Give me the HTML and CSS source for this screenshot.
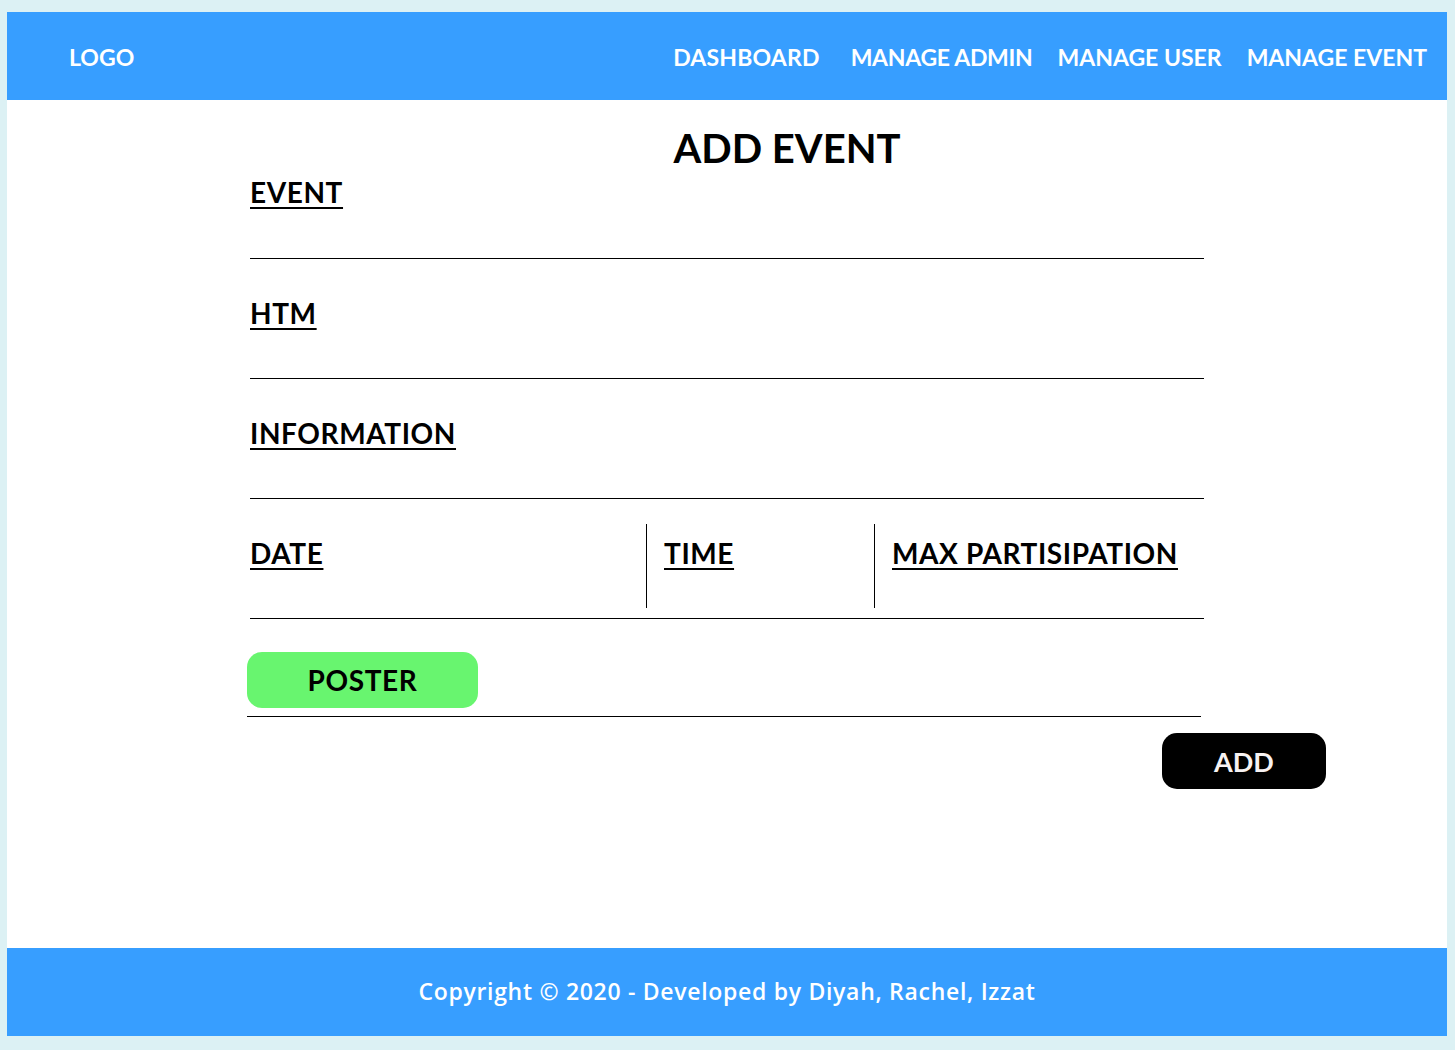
FILE: index.html
```html
<!DOCTYPE html>
<html lang="en">
<head>
<meta charset="utf-8">
<title>Add Event</title>
<link rel="stylesheet" href="styles.css">
</head>
<body>
<div class="page">
  <header class="topbar">
    <div class="logo">LOGO</div>
    <nav class="nav">
      <a class="nav-link nav-first" href="#">DASHBOARD</a>
      <a class="nav-link nav-admin" href="#">MANAGE ADMIN</a>
      <a class="nav-link" href="#">MANAGE USER</a>
      <a class="nav-link" href="#">MANAGE EVENT</a>
    </nav>
  </header>
  <main class="content">
    <form class="form">
      <h1 class="title">ADD EVENT</h1>
      <div class="field field-first"><label class="label">EVENT</label></div>
      <div class="field"><label class="label">HTM</label></div>
      <div class="field"><label class="label">INFORMATION</label></div>
      <div class="field field-row">
        <div class="col col-date"><label class="label">DATE</label></div>
        <div class="col col-time"><label class="label">TIME</label></div>
        <div class="col col-max"><label class="label">MAX PARTISIPATION</label></div>
      </div>
      <div class="poster-row">
        <button type="button" class="btn-poster">POSTER</button>
      </div>
      <div class="actions">
        <button type="button" class="btn-add">ADD</button>
      </div>
    </form>
  </main>
  <footer class="footer">Copyright © 2020 - Developed by Diyah, Rachel, Izzat</footer>
</div>
</body>
</html>
```
FILE: styles.css
```css
* { box-sizing: border-box; }
html, body { margin: 0; padding: 0; }
body {
  background: #dcf1f4;
  font-family: Lato, "Open Sans", sans-serif;
  color: #000;
}
.page {
  margin: 12px 8px 14px 7px;
  height: 1024px;
  display: flex;
  flex-direction: column;
  background: #fff;
}
.topbar {
  height: 88px;
  flex: none;
  background: #379eff;
  display: flex;
  align-items: center;
  justify-content: space-between;
  padding: 3px 20px 0 62px;
  color: #fff;
  font-size: 23px;
  font-weight: 700;
}
.logo { line-height: 1; }
.nav { display: flex; gap: 25px; }
.nav-link { color: #fff; text-decoration: none; line-height: 1; }
.nav-first { margin-right: 6px; letter-spacing: 0.2px; }
.nav-admin { letter-spacing: -0.3px; }
.content { flex: 1; }
.form {
  width: 954px;
  margin-left: 243px;
  display: flex;
  flex-direction: column;
}
.title {
  margin: 0;
  padding: 26px 0 0 120px;
  text-align: center;
  font-size: 40px;
  line-height: 44px;
  font-weight: 700;
}
.label {
  font-size: 28px;
  font-weight: 700;
  letter-spacing: 0.6px;
  text-decoration: underline;
  text-underline-offset: 4px;
  text-decoration-thickness: 2px;
  line-height: 32px;
  display: inline-block;
}
.field {
  height: 120px;
  border-bottom: 1px solid #000;
  padding-top: 38px;
}
.field-first {
  height: 89px;
  padding-top: 6px;
}
.field-row {
  display: flex;
  padding-top: 25px;
  height: 120px;
}
.col { height: 84px; padding-top: 13px; }
.col-date { width: 396px; }
.col-time { width: 228px; border-left: 1px solid #000; padding-left: 17px; }
.col-max { flex: 1; border-left: 1px solid #000; padding-left: 17px; }
.poster-row {
  margin-left: -3px;
  width: 954px;
  padding-top: 33px;
  padding-bottom: 8px;
  border-bottom: 1px solid #000;
}
.btn-poster {
  display: block;
  width: 231px;
  height: 56px;
  border: none;
  border-radius: 15px;
  background: #68f56f;
  font-family: inherit;
  font-size: 28px;
  font-weight: 700;
  letter-spacing: 0.6px;
  color: #000;
  padding: 0;
}
.actions {
  display: flex;
  justify-content: flex-end;
  margin-right: -122px;
  padding-top: 16px;
}
.btn-add {
  width: 164px;
  height: 56px;
  border: none;
  border-radius: 15px;
  background: #000;
  color: #f7f2f2;
  font-family: inherit;
  font-size: 27px;
  font-weight: 700;
  padding: 0;
}
.footer {
  height: 88px;
  flex: none;
  background: #379eff;
  color: #fff;
  display: flex;
  align-items: center;
  justify-content: center;
  font-family: "Open Sans", Lato, sans-serif;
  font-size: 23px;
  font-weight: 600;
  letter-spacing: 0.7px;
  padding-bottom: 2px;
}
```
